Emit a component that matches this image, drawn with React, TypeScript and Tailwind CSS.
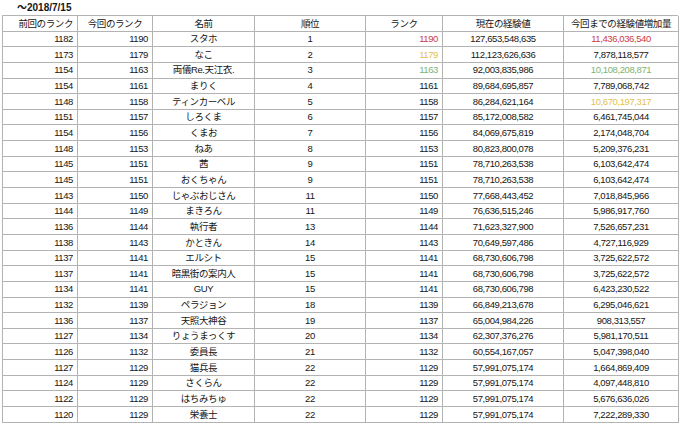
type Row = {
  prev: string;
  now: string;
  name: string;
  place: string;
  rank: string;
  exp: string;
  gain: string;
  rankTone?: 'red' | 'yellow' | 'green';
  gainTone?: 'red' | 'yellow' | 'green';
};

const ROWS: Row[] = [
  { prev: '1182', now: '1190', name: 'スタホ', place: '1', rank: '1190', exp: '127,653,548,635', gain: '11,436,036,540', rankTone: 'red', gainTone: 'red' },
  { prev: '1173', now: '1179', name: 'なこ', place: '2', rank: '1179', exp: '112,123,626,636', gain: '7,878,118,577', rankTone: 'yellow' },
  { prev: '1154', now: '1163', name: '両儀Re.天江衣.', place: '3', rank: '1163', exp: '92,003,835,986', gain: '10,108,208,871', rankTone: 'green', gainTone: 'green' },
  { prev: '1154', now: '1161', name: 'まりく', place: '4', rank: '1161', exp: '89,684,695,857', gain: '7,789,068,742' },
  { prev: '1148', now: '1158', name: 'ティンカーベル', place: '5', rank: '1158', exp: '86,284,621,164', gain: '10,670,197,317', gainTone: 'yellow' },
  { prev: '1151', now: '1157', name: 'しろくま', place: '6', rank: '1157', exp: '85,172,008,582', gain: '6,461,745,044' },
  { prev: '1154', now: '1156', name: 'くまお', place: '7', rank: '1156', exp: '84,069,675,819', gain: '2,174,048,704' },
  { prev: '1148', now: '1153', name: 'ねあ', place: '8', rank: '1153', exp: '80,823,800,078', gain: '5,209,376,231' },
  { prev: '1145', now: '1151', name: '茜', place: '9', rank: '1151', exp: '78,710,263,538', gain: '6,103,642,474' },
  { prev: '1145', now: '1151', name: 'おくちゃん', place: '9', rank: '1151', exp: '78,710,263,538', gain: '6,103,642,474' },
  { prev: '1143', now: '1150', name: 'じゃぶおじさん', place: '11', rank: '1150', exp: '77,668,443,452', gain: '7,018,845,966' },
  { prev: '1144', now: '1149', name: 'まきろん', place: '11', rank: '1149', exp: '76,636,515,246', gain: '5,986,917,760' },
  { prev: '1136', now: '1144', name: '執行者', place: '13', rank: '1144', exp: '71,623,327,900', gain: '7,526,657,231' },
  { prev: '1138', now: '1143', name: 'かときん', place: '14', rank: '1143', exp: '70,649,597,486', gain: '4,727,116,929' },
  { prev: '1137', now: '1141', name: 'エルシト', place: '15', rank: '1141', exp: '68,730,606,798', gain: '3,725,622,572' },
  { prev: '1137', now: '1141', name: '暗黒街の案内人', place: '15', rank: '1141', exp: '68,730,606,798', gain: '3,725,622,572' },
  { prev: '1134', now: '1141', name: 'GUY', place: '15', rank: '1141', exp: '68,730,606,798', gain: '6,423,230,522' },
  { prev: '1132', now: '1139', name: 'ペラジョン', place: '18', rank: '1139', exp: '66,849,213,678', gain: '6,295,046,621' },
  { prev: '1136', now: '1137', name: '天照大神谷', place: '19', rank: '1137', exp: '65,004,984,226', gain: '908,313,557' },
  { prev: '1127', now: '1134', name: 'りょうまっくす', place: '20', rank: '1134', exp: '62,307,376,276', gain: '5,981,170,511' },
  { prev: '1126', now: '1132', name: '委員長', place: '21', rank: '1132', exp: '60,554,167,057', gain: '5,047,398,040' },
  { prev: '1127', now: '1129', name: '猫兵長', place: '22', rank: '1129', exp: '57,991,075,174', gain: '1,664,869,409' },
  { prev: '1124', now: '1129', name: 'さくらん', place: '22', rank: '1129', exp: '57,991,075,174', gain: '4,097,448,810' },
  { prev: '1122', now: '1129', name: 'はちみちゅ', place: '22', rank: '1129', exp: '57,991,075,174', gain: '5,676,636,026' },
  { prev: '1120', now: '1129', name: '栄養士', place: '22', rank: '1129', exp: '57,991,075,174', gain: '7,222,289,330' },
];

const TONE = {
  red: 'text-[#cc3b3f]',
  yellow: 'text-[#e3bf4f]',
  green: 'text-[#7fb46f]',
};

const CELL = 'flex items-center whitespace-nowrap border-r border-b border-[#b3b3b3] px-[4px] leading-none';

export default function App() {
  return (
    <div className="h-[423px] w-[680px] overflow-hidden bg-white font-['Liberation_Sans','Noto_Sans_CJK_JP',sans-serif] text-[9.5px] tracking-[-0.4px] text-[#161616]">
      <div className="h-[15px] pl-[17px] pt-[3px] text-[10px] font-bold leading-[10px] tracking-normal">〜2018/7/15</div>
      <div className="ml-[2px] grid w-[676px] auto-rows-[15.65px] grid-cols-[75px_75px_102px_111px_77px_121px_115px] border-t border-l border-[#b3b3b3]">
        <div className={`${CELL} justify-end`}>前回のランク</div>
        <div className={`${CELL} justify-center`}>今回のランク</div>
        <div className={`${CELL} justify-center`}>名前</div>
        <div className={`${CELL} justify-center`}>順位</div>
        <div className={`${CELL} justify-center`}>ランク</div>
        <div className={`${CELL} justify-center`}>現在の経験値</div>
        <div className={`${CELL} justify-center`}>今回までの経験値増加量</div>
        {ROWS.map((r, i) => (
          <div key={i} className="contents">
            <div className={`${CELL} justify-end`}>{r.prev}</div>
            <div className={`${CELL} justify-end`}>{r.now}</div>
            <div className={`${CELL} justify-center`}>{r.name}</div>
            <div className={`${CELL} justify-center`}>{r.place}</div>
            <div className={`${CELL} justify-end ${r.rankTone ? TONE[r.rankTone] : ''}`}>{r.rank}</div>
            <div className={`${CELL} justify-center`}>{r.exp}</div>
            <div className={`${CELL} justify-center ${r.gainTone ? TONE[r.gainTone] : ''}`}>{r.gain}</div>
          </div>
        ))}
      </div>
    </div>
  );
}
